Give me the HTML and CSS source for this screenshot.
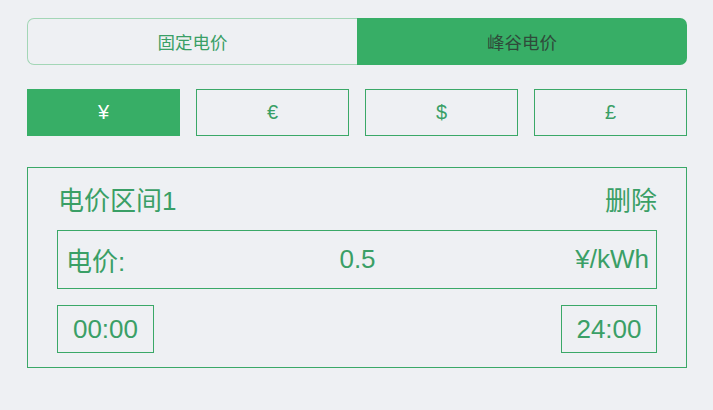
FILE: index.html
```html
<!DOCTYPE html>
<html lang="zh">
<head>
<meta charset="utf-8">
<link rel="stylesheet" href="styles.css">
</head>
<body>
<div class="page">
  <div class="segment">
    <div class="seg seg-off">固定电价</div>
    <div class="seg seg-on">峰谷电价</div>
  </div>
  <div class="currencies">
    <div class="cur cur-on">¥</div>
    <div class="cur">€</div>
    <div class="cur">$</div>
    <div class="cur">£</div>
  </div>
  <div class="card">
    <div class="card-head">
      <span>电价区间1</span>
      <span>删除</span>
    </div>
    <div class="price">
      <span class="price-label">电价:</span>
      <span class="price-value">0.5</span>
      <span class="price-unit">¥/kWh</span>
    </div>
    <div class="times">
      <div class="time">00:00</div>
      <div class="time">24:00</div>
    </div>
  </div>
</div>
</body>
</html>
```

FILE: styles.css
```css
html, body {
  margin: 0;
  padding: 0;
  background: #eef0f3;
}
body {
  font-family: "Liberation Sans", "Noto Sans CJK SC", sans-serif;
  color: #3a9f66;
}
.page {
  padding: 18px 26px 0 27px;
  display: flex;
  flex-direction: column;
}
.segment {
  display: grid;
  grid-template-columns: 1fr 1fr;
  height: 47px;
}
.seg {
  display: flex;
  align-items: center;
  justify-content: center;
  font-size: 17.5px;
}
.seg-off {
  border: 1px solid #a3d6b6;
  border-right: none;
  border-radius: 7px 0 0 7px;
  color: #3a9f66;
}
.seg-on {
  background: #37ae66;
  border-radius: 0 7px 7px 0;
  color: #2f4a3a;
}
.currencies {
  margin-top: 24px;
  display: grid;
  grid-template-columns: repeat(4, 1fr);
  gap: 16px;
  height: 47px;
}
.cur {
  border: 1px solid #3aa867;
  display: flex;
  align-items: center;
  justify-content: center;
  font-size: 20px;
  color: #3a9f66;
}
.cur-on {
  background: #37ae66;
  border-color: #37ae66;
  color: #ffffff;
}
.card {
  margin-top: 31px;
  border: 1px solid #3aa867;
  padding: 15px 29px 14px 29px;
  display: flex;
  flex-direction: column;
}
.card-head {
  display: flex;
  justify-content: space-between;
  align-items: center;
  height: 30px;
  font-size: 26px;
  padding-left: 1px;
}
.price {
  margin-top: 17px;
  height: 57px;
  border: 1px solid #3aa867;
  display: grid;
  grid-template-columns: 1fr auto 1fr;
  align-items: center;
  padding: 0 7px 0 8px;
  font-size: 26px;
}
.price-value {
  text-align: center;
}
.price-unit {
  text-align: right;
}
.times {
  margin-top: 16px;
  display: flex;
  justify-content: space-between;
}
.time {
  height: 46px;
  width: 95px;
  border: 1px solid #3aa867;
  display: flex;
  align-items: center;
  justify-content: center;
  font-size: 26px;
}
.time + .time {
  width: 94px;
}
```
